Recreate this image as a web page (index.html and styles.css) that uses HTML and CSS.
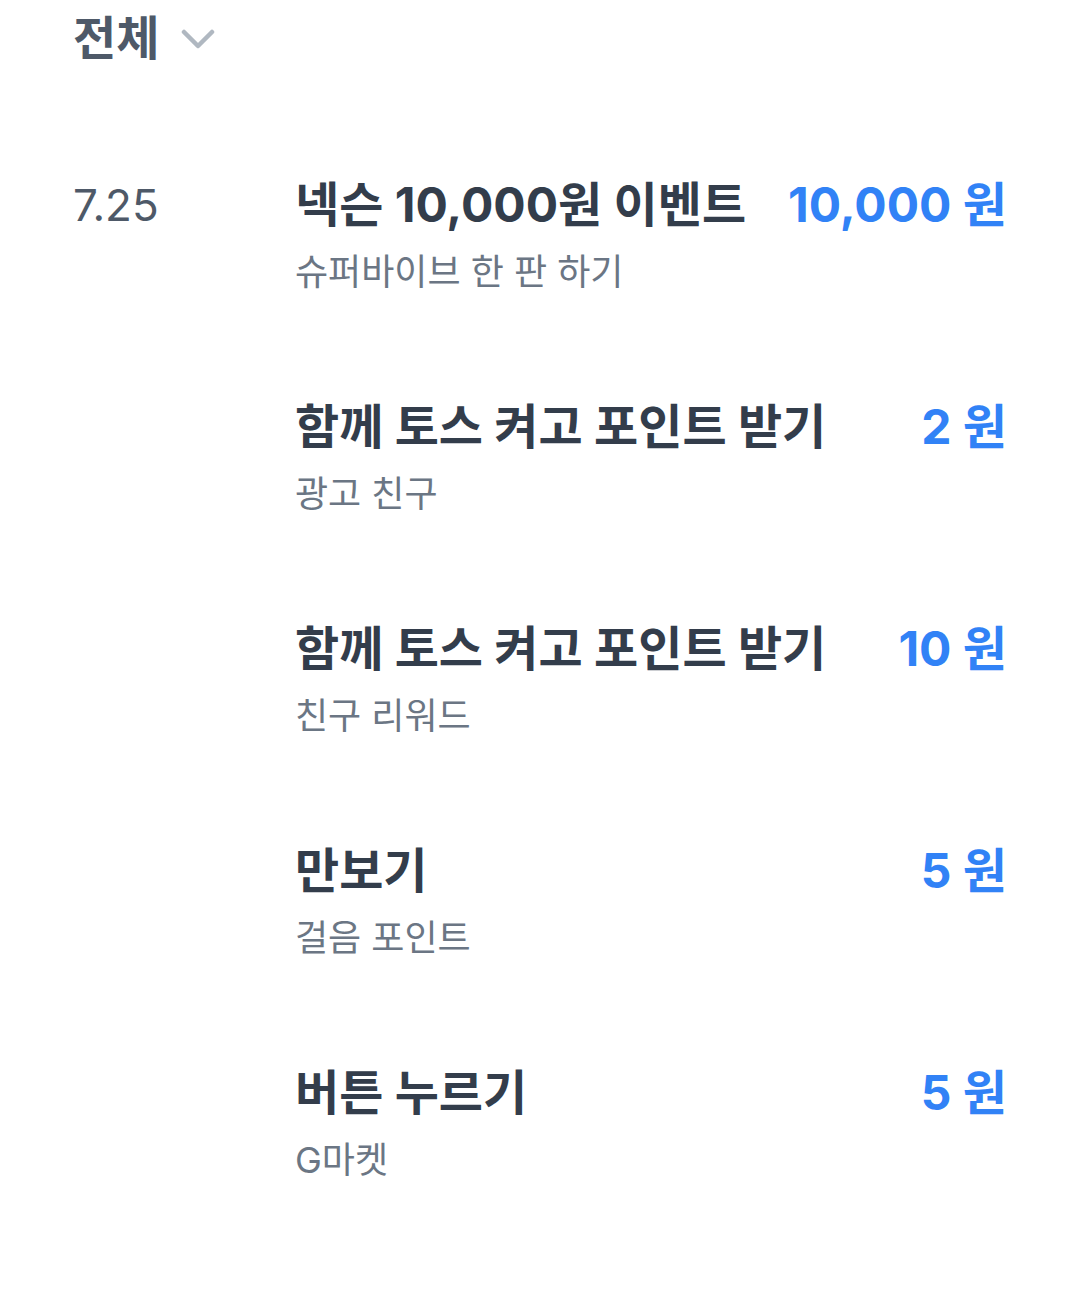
FILE: index.html
```html
<!DOCTYPE html>
<html lang="ko">
<head>
    <meta charset="UTF-8">
    <meta name="viewport" content="width=device-width, initial-scale=1.0">
    <title>포인트 내역</title>
    <link rel="stylesheet" href="styles.css">
</head>
<body>
    <div class="filter">
        <span class="filter-text">전체</span>
        <svg class="chev" width="34" height="22" viewBox="0 0 34 22">
            <polyline points="3,4 17,18 31,4" fill="none" stroke="#b0b8c1" stroke-width="4.5" stroke-linecap="round" stroke-linejoin="round"/>
        </svg>
    </div>

    <div class="list">
        <div class="row">
            <div class="date">7.25</div>
            <div class="info">
                <p class="title">넥슨 10,000원 이벤트</p>
                <p class="sub">슈퍼바이브 한 판 하기</p>
            </div>
            <div class="amount">10,000 원</div>
        </div>
        <div class="row">
            <div class="date"></div>
            <div class="info">
                <p class="title">함께 토스 켜고 포인트 받기</p>
                <p class="sub">광고 친구</p>
            </div>
            <div class="amount">2 원</div>
        </div>
        <div class="row">
            <div class="date"></div>
            <div class="info">
                <p class="title">함께 토스 켜고 포인트 받기</p>
                <p class="sub">친구 리워드</p>
            </div>
            <div class="amount">10 원</div>
        </div>
        <div class="row">
            <div class="date"></div>
            <div class="info">
                <p class="title">만보기</p>
                <p class="sub">걸음 포인트</p>
            </div>
            <div class="amount">5 원</div>
        </div>
        <div class="row">
            <div class="date"></div>
            <div class="info">
                <p class="title">버튼 누르기</p>
                <p class="sub">G마켓</p>
            </div>
            <div class="amount">5 원</div>
        </div>
    </div>
</body>
</html>
```

FILE: styles.css
```css
body{
    margin: 0;
    background-color: #ffffff;
    font-family: "Inter", "Noto Sans CJK KR", sans-serif;
}
.filter{
    display: flex;
    align-items: center;
    gap: 22px;
    height: 76px;
    padding-left: 73px;
}
.filter-text{
    font-size: 47px;
    font-weight: bold;
    color: #4e5968;
    line-height: 76px;
}
.chev{
    margin-top: 2px;
}
.list{
    margin-top: 99px;
    padding: 0 73px 0 73px;
    display: flex;
    flex-direction: column;
    gap: 100px;
}
.row{
    display: flex;
    align-items: flex-start;
}
.date{
    width: 222px;
    flex-shrink: 0;
    font-size: 44px;
    line-height: 60px;
    color: #4e5968;
}
.info{
    flex: 1;
}
.title{
    margin: 0;
    font-size: 48px;
    font-weight: bold;
    line-height: 60px;
    color: #333d4b;
}
.sub{
    margin: 12px 0 0 0;
    font-size: 36px;
    line-height: 50px;
    color: #6b7684;
}
.amount{
    font-size: 48px;
    font-weight: bold;
    line-height: 60px;
    color: #3182f6;
    white-space: nowrap;
}
```
